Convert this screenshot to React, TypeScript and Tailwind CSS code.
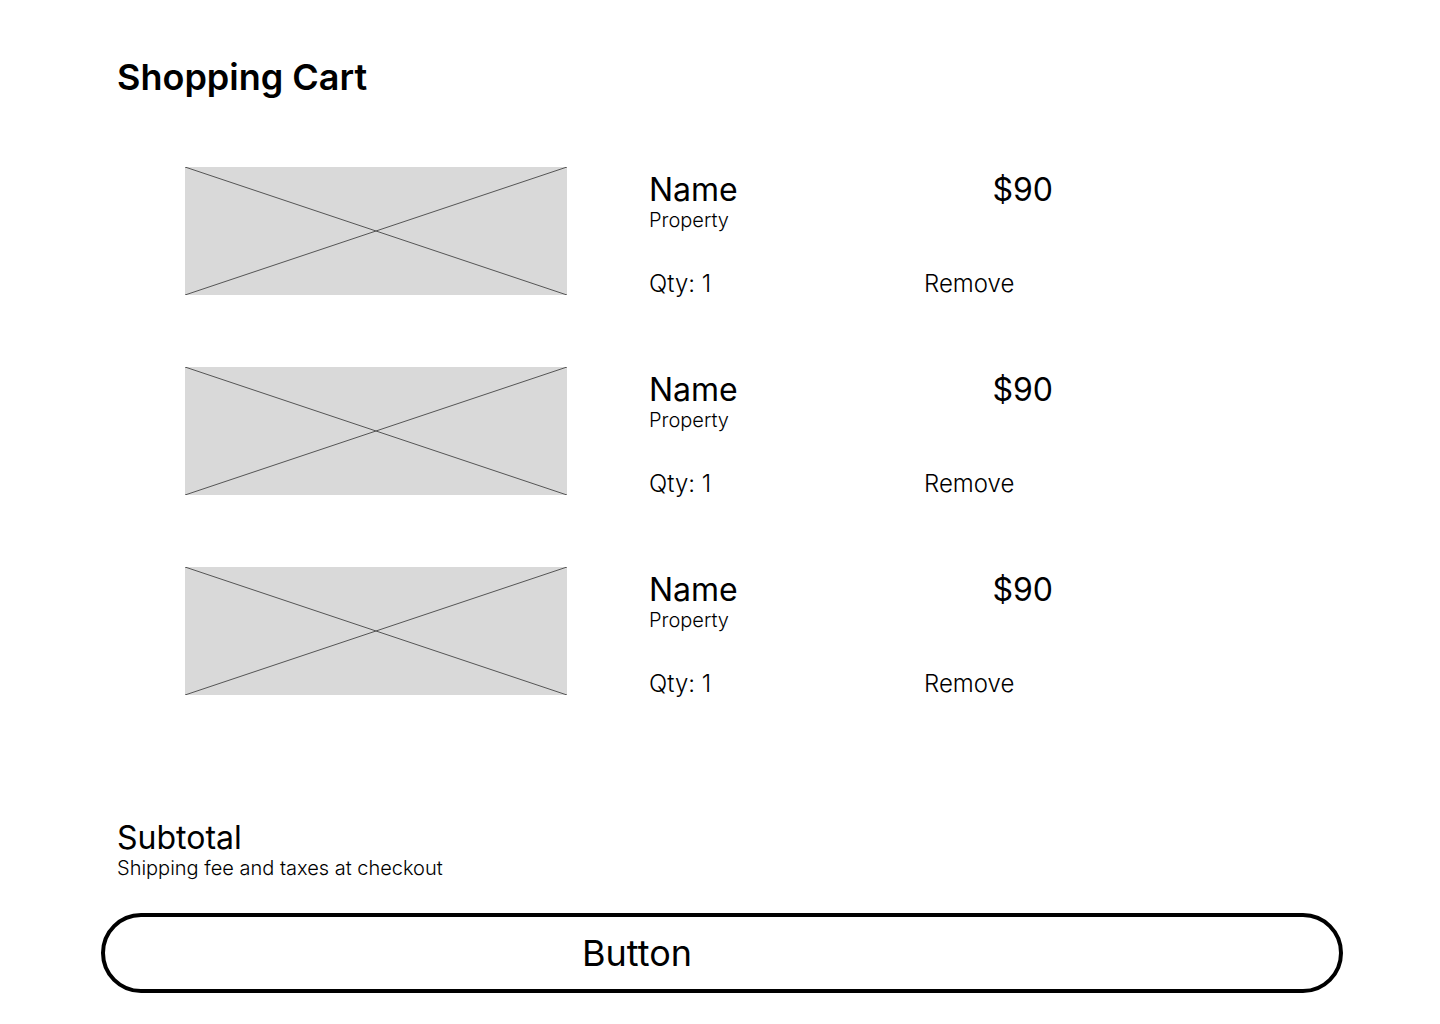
import React from "react";

function Placeholder() {
  return (
    <div className="w-[382px] h-[128px] bg-[#d9d9d9] shrink-0">
      <svg width="382" height="128" viewBox="0 0 382 128" className="block">
        <line x1="0" y1="0" x2="382" y2="128" stroke="#555" strokeWidth="1" />
        <line x1="382" y1="0" x2="0" y2="128" stroke="#555" strokeWidth="1" />
      </svg>
    </div>
  );
}

function Item() {
  return (
    <div className="flex items-start pl-[185px] h-[128px]">
      <Placeholder />
      <div className="ml-[82px] w-[404px] pt-[5px]">
        <div className="flex justify-between items-start">
          <div>
            <div className="text-[32px] leading-[36px] text-black">Name</div>
            <div className="text-[20px] leading-[24px] font-light text-black">Property</div>
          </div>
          <div className="text-[32px] leading-[36px] text-black">$90</div>
        </div>
        <div className="flex mt-[36px] text-[24px] leading-[32px] font-light text-black">
          <div className="w-[275px]">Qty: 1</div>
          <div>Remove</div>
        </div>
      </div>
    </div>
  );
}

export default function App() {
  return (
    <div
      className="w-[1440px] h-[1024px] bg-white relative overflow-hidden"
      style={{ fontFamily: "Inter, 'Noto Sans', sans-serif" }}
    >
      <div className="pl-[117px] pt-[55px]">
        <h1 className="text-[36px] leading-[44px] font-semibold text-black">Shopping Cart</h1>
      </div>
      <div className="mt-[68px] flex flex-col gap-[72px]">
        <Item />
        <Item />
        <Item />
      </div>
      <div className="pl-[117px] mt-[125px]">
        <div className="text-[32px] leading-[36px] text-black">Subtotal</div>
        <div className="text-[20px] leading-[24px] font-light text-black">Shipping fee and taxes at checkout</div>
      </div>
      <div className="px-[101px] mt-[33px]">
        <div className="w-[1242px] h-[80px] border-[4px] border-black rounded-full flex items-center justify-center pr-[170px]">
          <span className="text-[36px] leading-[40px] text-black">Button</span>
        </div>
      </div>
    </div>
  );
}
